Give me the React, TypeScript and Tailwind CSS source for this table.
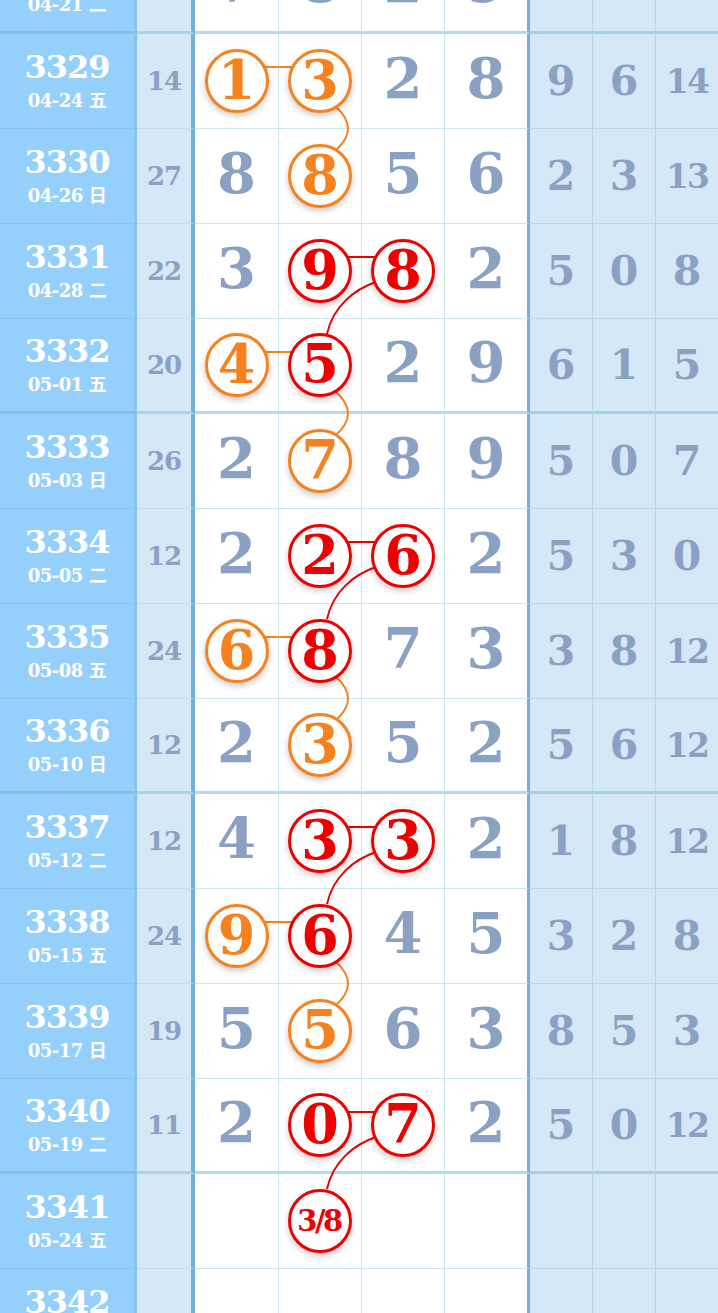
import React from "react";

type Row = {
  no: string;
  date: string;
  wd: string;
  sum: string;
  d: string[];
  r: string[];
};

// o = 橙圈, r = 红圈
const rows: Row[] = [
  { no: "3328", date: "04-21", wd: "二", sum: "", d: ["7", "8", "2", "9"], r: ["", "", ""] },
  { no: "3329", date: "04-24", wd: "五", sum: "14", d: ["o1", "o3", "2", "8"], r: ["9", "6", "14"] },
  { no: "3330", date: "04-26", wd: "日", sum: "27", d: ["8", "o8", "5", "6"], r: ["2", "3", "13"] },
  { no: "3331", date: "04-28", wd: "二", sum: "22", d: ["3", "r9", "r8", "2"], r: ["5", "0", "8"] },
  { no: "3332", date: "05-01", wd: "五", sum: "20", d: ["o4", "r5", "2", "9"], r: ["6", "1", "5"] },
  { no: "3333", date: "05-03", wd: "日", sum: "26", d: ["2", "o7", "8", "9"], r: ["5", "0", "7"] },
  { no: "3334", date: "05-05", wd: "二", sum: "12", d: ["2", "r2", "r6", "2"], r: ["5", "3", "0"] },
  { no: "3335", date: "05-08", wd: "五", sum: "24", d: ["o6", "r8", "7", "3"], r: ["3", "8", "12"] },
  { no: "3336", date: "05-10", wd: "日", sum: "12", d: ["2", "o3", "5", "2"], r: ["5", "6", "12"] },
  { no: "3337", date: "05-12", wd: "二", sum: "12", d: ["4", "r3", "r3", "2"], r: ["1", "8", "12"] },
  { no: "3338", date: "05-15", wd: "五", sum: "24", d: ["o9", "r6", "4", "5"], r: ["3", "2", "8"] },
  { no: "3339", date: "05-17", wd: "日", sum: "19", d: ["5", "o5", "6", "3"], r: ["8", "5", "3"] },
  { no: "3340", date: "05-19", wd: "二", sum: "11", d: ["2", "r0", "r7", "2"], r: ["5", "0", "12"] },
  { no: "3341", date: "05-24", wd: "五", sum: "", d: ["", "r3/8", "", ""], r: ["", "", ""] },
  { no: "3342", date: "05-26", wd: "日", sum: "", d: ["", "", "", ""], r: ["", "", ""] },
];

const ORANGE = "#f5821f";
const RED = "#ee0000";
const colX = [236.5, 320, 403, 486];
const cy = (i: number) => 81 + 95 * i;

function Ball({ v }: { v: string }) {
  const red = v[0] === "r";
  const txt = v.slice(1);
  return (
    <div
      className={`relative z-[2] flex h-[64px] w-[64px] items-center justify-center rounded-full border-[3px] bg-white font-bold leading-none shadow-[0_3px_6px_rgba(0,0,0,0.22)] ${
        red ? "border-[#ee0000] text-[#ee0000]" : "border-[#f5821f] text-[#f5821f]"
      } ${txt.length > 1 ? "text-[29px] tracking-[-2.5px]" : "text-[54px]"}`}
    >
      <span className={txt.length > 1 ? "pr-[2px]" : "pb-[2px]"}>{txt}</span>
    </div>
  );
}

function Links() {
  const paths: React.ReactNode[] = [];
  // 同行横线
  [0, 3, 6, 9].forEach((i) => {
    const y = cy(i) - 14;
    paths.push(<line key={"oh" + i} x1={colX[0]} y1={y} x2={colX[1]} y2={y} stroke={ORANGE} strokeWidth={2} />);
  });
  [2, 5, 8, 11].forEach((i) => {
    const y = cy(i) - 14;
    paths.push(<line key={"rh" + i} x1={colX[1]} y1={y} x2={colX[2]} y2={y} stroke={RED} strokeWidth={2} />);
  });
  // 橙色弧线（同列向下）
  [0, 3, 6, 9].forEach((i) => {
    const x = colX[1];
    const y1 = cy(i);
    const y2 = cy(i + 1);
    paths.push(
      <path
        key={"oa" + i}
        d={`M ${x + 16} ${y1 + 26} Q ${x + 40} ${(y1 + y2) / 2} ${x + 16} ${y2 - 26}`}
        fill="none"
        stroke={ORANGE}
        strokeWidth={2}
      />
    );
  });
  // 红色斜线
  [2, 5, 8, 11].forEach((i) => {
    const x = colX[2];
    const y = cy(i);
    paths.push(
      <path
        key={"ra" + i}
        d={`M ${x - 27} ${y + 11} C ${x - 48} ${y + 18} ${x - 70} ${y + 35} ${x - 76} ${y + 63}`}
        fill="none"
        stroke={RED}
        strokeWidth={2}
      />
    );
  });
  return (
    <svg className="pointer-events-none absolute left-0 top-0 z-[1]" width={718} height={1313}>
      {paths}
    </svg>
  );
}

export default function App() {
  return (
    <div className="relative h-[1313px] w-[718px] overflow-hidden bg-white font-[family-name:DejaVu_Serif,serif] font-bold">
      <Links />
      <div className="-mt-[61px] flex flex-col">
        {rows.map((row, i) => {
          const thick = i % 4 === 0;
          const bb = thick ? "border-b-[3px]" : "border-b";
          return (
            <div key={row.no} className="flex h-[95px]">
              <div
                className={`flex w-[137px] flex-col items-center justify-center gap-[7px] border-r-[3px] border-r-[#88c3ee] bg-[#95cffb] text-white ${bb} ${
                  thick ? "border-b-[#86bfe6]" : "border-b-[#88c4ef]"
                }`}
              >
                <div className="text-[32px] leading-[32px] tracking-[-1px]">{row.no}</div>
                <div className="flex items-baseline gap-[6px] text-[18px] leading-[20px] tracking-[-0.5px]">
                  <span>{row.date}</span>
                  <span className="font-[family-name:Noto_Sans_CJK_SC,sans-serif] text-[18px] leading-none">{row.wd}</span>
                </div>
              </div>
              <div
                className={`flex w-[58px] items-center justify-center border-r-[4px] border-r-[#76aed6] bg-[#d5e8f8] text-[26px] tracking-[-1px] text-[#8aa1c3] ${bb} ${
                  thick ? "border-b-[#a9d2ec]" : "border-b-[#c0ddf2]"
                }`}
              >
                {row.sum}
              </div>
              {row.d.map((v, j) => (
                <div
                  key={j}
                  className={`flex items-center justify-center bg-white text-[#8aa1c3] ${bb} ${
                    thick ? "border-b-[#b3dbee]" : "border-b-[#cde6f2]"
                  } ${j === 0 ? "w-[83px]" : "w-[83px] border-l border-l-[#cde6f2]"} ${
                    j === 3 ? "w-[86px] border-r-[3px] border-r-[#76aed6]" : ""
                  }`}
                >
                  {v && (v[0] === "o" || v[0] === "r") ? (
                    <Ball v={v} />
                  ) : (
                    <span className="pb-[6px] text-[56px] leading-none">{v}</span>
                  )}
                </div>
              ))}
              {row.r.map((v, j) => (
                <div
                  key={"r" + j}
                  className={`flex flex-1 items-center justify-center bg-[#d5e8f8] text-[#8aa1c3] ${bb} ${
                    thick ? "border-b-[#a6cfea]" : "border-b-[#b8d8ee]"
                  } ${j > 0 ? "border-l border-l-[#b4d5ec]" : ""} ${
                    v.length > 1 ? "text-[33px] tracking-[-2px]" : "text-[41px]"
                  } leading-none`}
                >
                  {v}
                </div>
              ))}
            </div>
          );
        })}
      </div>
    </div>
  );
}
